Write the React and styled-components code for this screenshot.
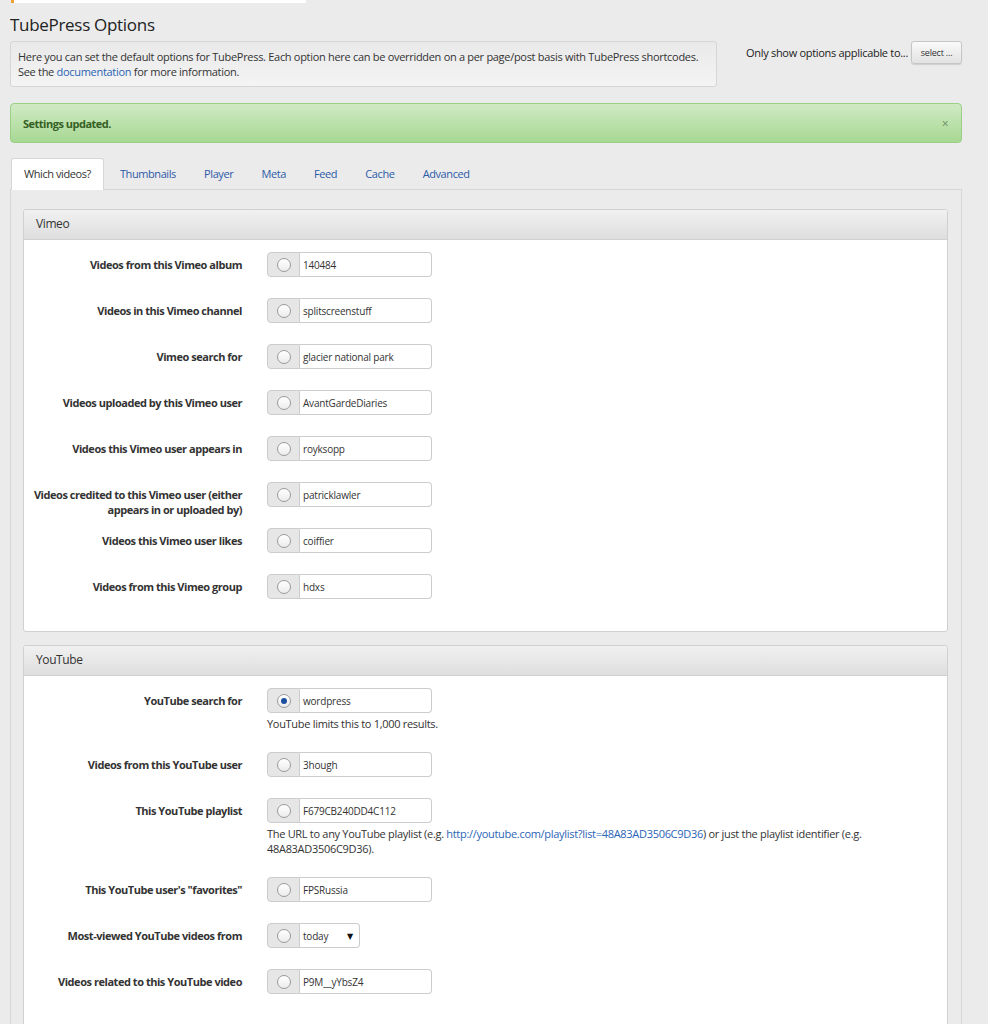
import styled, { createGlobalStyle } from "styled-components";

const GlobalStyle = createGlobalStyle`
    body {
        margin: 0;
        background: #ebebeb;
        font-family: "Open Sans", "DejaVu Sans", sans-serif;
        color: #333;
        letter-spacing: -0.3px;
    }
`;

const StyledPage = styled.div`
    padding: 0 26px 40px 10px;
    font-size: 11px;
`;

const StyledTopNotice = styled.div`
    width: 292px;
    height: 3px;
    margin-left: 1px;
    background: #fff;
    border-left: 3px solid #f0a133;
`;

const StyledTitle = styled.h2`
    margin: 10px 0 0;
    font-size: 17px;
    font-weight: 400;
    line-height: 23px;
    color: #222;
`;

const StyledHeaderRow = styled.div`
    display: flex;
    justify-content: space-between;
    align-items: flex-start;
    margin-top: 5px;
`;

const StyledIntro = styled.div`
    box-sizing: border-box;
    width: 707px;
    height: 46px;
    padding: 7px 7px;
    border: 1px solid #d6d6d6;
    border-radius: 3px;
    background: linear-gradient(#e9e9e9, #f4f4f4);
    line-height: 15px;
    color: #333;
`;

const StyledLink = styled.a`
    color: #2a64b5;
    text-decoration: none;
`;

const StyledFilter = styled.div`
    display: flex;
    align-items: center;
    gap: 3px;
    font-size: 11px;
    color: #222;
`;

const StyledSelectButton = styled.button`
    box-sizing: border-box;
    width: 51px;
    height: 23px;
    padding: 0;
    border: 1px solid #c6c6c6;
    border-radius: 3px;
    background: linear-gradient(#fafafa, #e2e2e2);
    box-shadow: 0 1px 1px rgba(0, 0, 0, 0.12);
    font-family: inherit;
    font-size: 9px;
    letter-spacing: -0.2px;
    color: #333;
`;

const StyledAlert = styled.div`
    box-sizing: border-box;
    display: flex;
    justify-content: space-between;
    align-items: center;
    height: 40px;
    margin-top: 16px;
    padding: 0 13px 0 12px;
    border: 1px solid #99d086;
    border-radius: 4px;
    background: linear-gradient(#d0eac4, #a7d893);
    font-weight: 700;
    letter-spacing: -0.5px;
    color: #356024;
`;

const StyledClose = styled.span`
    font-weight: 400;
    font-size: 12px;
    color: #6b8d60;
`;

const StyledTabs = styled.div`
    display: flex;
    margin-top: 15px;
    padding-left: 1px;
`;

const StyledTab = styled.div`
    box-sizing: border-box;
    height: 32px;
    margin-right: ${(p) => (p.$active ? "2px" : "0")};
    margin-bottom: -1px;
    padding: 0 ${(p) => (p.$active ? "12px" : "13.1px")} 3px;
    display: flex;
    align-items: center;
    border: 1px solid ${(p) => (p.$active ? "#d6d6d6" : "transparent")};
    border-bottom: none;
    border-radius: 3px 3px 0 0;
    background: ${(p) => (p.$active ? "#fff" : "transparent")};
    letter-spacing: -0.42px;
    color: ${(p) => (p.$active ? "#333" : "#2b5aa8")};
`;

const StyledTabContent = styled.div`
    padding: 19px 13px 19px 12px;
    border: 1px solid #d6d6d6;
    border-bottom: none;
`;

const StyledPanel = styled.section`
    margin-bottom: 13px;
    border: 1px solid #d0d0d0;
    border-radius: 3px;
    background: #fff;
`;

const StyledPanelHeader = styled.div`
    box-sizing: border-box;
    height: 30px;
    padding: 0 12px 2px;
    display: flex;
    align-items: center;
    border-bottom: 1px solid #d0d0d0;
    border-radius: 3px 3px 0 0;
    background: linear-gradient(#f1f1f1, #dedede);
    font-size: 12px;
    letter-spacing: -0.4px;
    color: #333;
`;

const StyledPanelBody = styled.div`
    padding: 12px 12px 11px 8px;
`;

const StyledRow = styled.div`
    display: grid;
    grid-template-columns: 210px 1fr;
    column-gap: 25px;
    margin-bottom: 21px;
`;

const StyledLabel = styled.label`
    box-sizing: border-box;
    height: 25px;
    padding-top: 5px;
    text-align: right;
    font-weight: 700;
    line-height: 15px;
    letter-spacing: -0.46px;
    color: #333;
`;

const StyledField = styled.div`
    display: flex;
    flex-direction: column;
    align-items: flex-start;
`;

const StyledInputGroup = styled.div`
    display: flex;
    height: 25px;
`;

const StyledAddon = styled.span`
    box-sizing: border-box;
    width: 33px;
    display: flex;
    align-items: center;
    justify-content: center;
    border: 1px solid #cccccc;
    border-radius: 4px 0 0 4px;
    background: #e6e6e6;
`;

const StyledRadio = styled.span`
    box-sizing: border-box;
    width: 14px;
    height: 14px;
    display: flex;
    align-items: center;
    justify-content: center;
    border: 1px solid #9a9a9a;
    border-radius: 50%;
    background: linear-gradient(#ffffff, #ececec);

    &::after {
        content: "";
        display: ${(p) => (p.$checked ? "block" : "none")};
        width: 6px;
        height: 6px;
        border-radius: 50%;
        background: #1d4fa0;
    }
`;

const StyledInput = styled.div`
    box-sizing: border-box;
    width: ${(p) => (p.$narrow ? "60px" : "132px")};
    display: flex;
    align-items: center;
    justify-content: space-between;
    padding: 0 6px 0 3px;
    border: 1px solid #cccccc;
    border-left: none;
    border-radius: 0 4px 4px 0;
    background: #fff;
    font-size: 10px;
    letter-spacing: -0.2px;
    color: #333;
`;

const StyledArrow = styled.span`
    font-size: 8px;
    color: #111;
`;

const StyledHelp = styled.p`
    margin: 3px 0 0;
    max-width: 640px;
    line-height: 15px;
    color: #333;
`;

const vimeoRows = [
    { label: "Videos from this Vimeo album", value: "140484" },
    { label: "Videos in this Vimeo channel", value: "splitscreenstuff" },
    { label: "Vimeo search for", value: "glacier national park" },
    { label: "Videos uploaded by this Vimeo user", value: "AvantGardeDiaries" },
    { label: "Videos this Vimeo user appears in", value: "royksopp" },
    { label: "Videos credited to this Vimeo user (either appears in or uploaded by)", value: "patricklawler" },
    { label: "Videos this Vimeo user likes", value: "coiffier" },
    { label: "Videos from this Vimeo group", value: "hdxs" },
];

const youtubeRows = [
    { label: "YouTube search for", value: "wordpress", checked: true, help: "YouTube limits this to 1,000 results." },
    { label: "Videos from this YouTube user", value: "3hough" },
    {
        label: "This YouTube playlist",
        value: "F679CB240DD4C112",
        help: (
            <>
                The URL to any YouTube playlist (e.g.{" "}
                <StyledLink href="#">http://youtube.com/playlist?list=48A83AD3506C9D36</StyledLink>) or just the playlist identifier (e.g. 48A83AD3506C9D36).
            </>
        ),
    },
    { label: "This YouTube user's \"favorites\"", value: "FPSRussia" },
    { label: "Most-viewed YouTube videos from", value: "today", select: true },
    { label: "Videos related to this YouTube video", value: "P9M__yYbsZ4" },
];

const tabs = ["Which videos?", "Thumbnails", "Player", "Meta", "Feed", "Cache", "Advanced"];

function OptionRow({ row }) {
    return (
        <StyledRow>
            <StyledLabel>{row.label}</StyledLabel>
            <StyledField>
                <StyledInputGroup>
                    <StyledAddon>
                        <StyledRadio $checked={row.checked} />
                    </StyledAddon>
                    <StyledInput $narrow={row.select}>
                        {row.value}
                        {row.select && <StyledArrow>▼</StyledArrow>}
                    </StyledInput>
                </StyledInputGroup>
                {row.help && <StyledHelp>{row.help}</StyledHelp>}
            </StyledField>
        </StyledRow>
    );
}

function OptionsPanel({ title, rows }) {
    return (
        <StyledPanel>
            <StyledPanelHeader>{title}</StyledPanelHeader>
            <StyledPanelBody>
                {rows.map((row) => (
                    <OptionRow key={row.label} row={row} />
                ))}
            </StyledPanelBody>
        </StyledPanel>
    );
}

export default function App() {
    return (
        <StyledPage>
            <GlobalStyle />
            <StyledTopNotice />
            <StyledTitle>TubePress Options</StyledTitle>
            <StyledHeaderRow>
                <StyledIntro>
                    Here you can set the default options for TubePress. Each option here can be overridden on a per page/post basis with TubePress shortcodes.
                    <br />
                    See the <StyledLink href="#">documentation</StyledLink> for more information.
                </StyledIntro>
                <StyledFilter>
                    Only show options applicable to...
                    <StyledSelectButton>select ...</StyledSelectButton>
                </StyledFilter>
            </StyledHeaderRow>
            <StyledAlert>
                Settings updated.
                <StyledClose>×</StyledClose>
            </StyledAlert>
            <StyledTabs>
                {tabs.map((tab, i) => (
                    <StyledTab key={tab} $active={i === 0}>
                        {tab}
                    </StyledTab>
                ))}
            </StyledTabs>
            <StyledTabContent>
                <OptionsPanel title="Vimeo" rows={vimeoRows} />
                <OptionsPanel title="YouTube" rows={youtubeRows} />
            </StyledTabContent>
        </StyledPage>
    );
}
